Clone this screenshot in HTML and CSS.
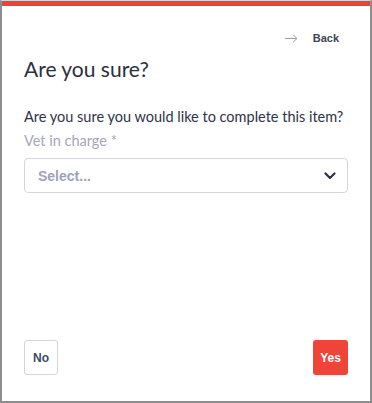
FILE: index.html
```html
<!DOCTYPE html>
<html>
<head>
<meta charset="utf-8">
<link rel="stylesheet" href="styles.css">
</head>
<body>
<div class="frame">
  <div class="card">
    <div class="topbar">
      <a class="back">
        <svg class="arrow" width="13" height="9" viewBox="0 0 13 9"><path d="M0 4.5H12M8 0.8L12 4.5L8 8.2" fill="none" stroke="#9ba1b3" stroke-width="1"/></svg>
        <span>Back</span>
      </a>
    </div>
    <h1 class="title">Are you sure?</h1>
    <p class="question">Are you sure you would like to complete this item?</p>
    <label class="label">Vet in charge *</label>
    <div class="select">
      <span class="placeholder">Select...</span>
      <svg class="chevron" width="12" height="8" viewBox="0 0 12 8"><path d="M1.5 1.5L6 6L10.5 1.5" fill="none" stroke="#2e3346" stroke-width="2.2" stroke-linecap="round" stroke-linejoin="round"/></svg>
    </div>
    <div class="footer">
      <button class="btn btn-no">No</button>
      <button class="btn btn-yes">Yes</button>
    </div>
  </div>
</div>
</body>
</html>
```
FILE: styles.css
```css
* { box-sizing: border-box; }
html, body { margin: 0; padding: 0; background: #ffffff; }
body { font-family: "Lato", "Liberation Sans", sans-serif; }
.frame {
  width: 372px;
  height: 403px;
  border-top: 1px solid #d4d4d4;
  border-left: 2px solid #8e8e8e;
  border-right: 2px solid #8e8e8e;
  border-bottom: 2px solid #8e8e8e;
  background: #fff;
}
.card {
  height: 100%;
  border-top: 5px solid #ef4136;
  padding: 0 22px 26px 22px;
  display: flex;
  flex-direction: column;
}
.topbar {
  display: flex;
  justify-content: flex-end;
  padding-top: 24px;
  padding-right: 9px;
  height: 40px;
}
.back {
  display: flex;
  align-items: center;
  gap: 15px;
  height: 16px;
  font-family: "Liberation Sans", sans-serif;
  font-weight: bold;
  font-size: 11px;
  color: #3e4356;
}
.title {
  margin: 11px 0 0 0;
  font-size: 21px;
  line-height: 24px;
  font-weight: 400;
  color: #2b2f3f;
}
.question {
  margin: 26px 0 0 0;
  font-size: 14.5px;
  line-height: 20px;
  color: #2f3345;
}
.label {
  margin-top: 4px;
  font-size: 14.5px;
  line-height: 20px;
  color: #a3a7ba;
}
.select {
  margin-top: 7px;
  height: 35px;
  border: 1px solid #d3d6df;
  border-radius: 4px;
  display: flex;
  align-items: center;
  justify-content: space-between;
  padding: 0 11px 0 13px;
}
.placeholder {
  font-family: "Liberation Sans", sans-serif;
  font-weight: bold;
  font-size: 14px;
  color: #9fa3b6;
}
.footer {
  margin-top: auto;
  display: flex;
  justify-content: space-between;
}
.btn {
  height: 35px;
  border-radius: 3px;
  font-family: "Liberation Sans", sans-serif;
  font-weight: bold;
  font-size: 12px;
  padding: 0;
}
.btn-no {
  width: 34px;
  background: #fff;
  border: 1px solid #d3d6df;
  color: #3b4a68;
}
.btn-yes {
  width: 35px;
  background: #f04438;
  border: none;
  color: #fff;
}
```
